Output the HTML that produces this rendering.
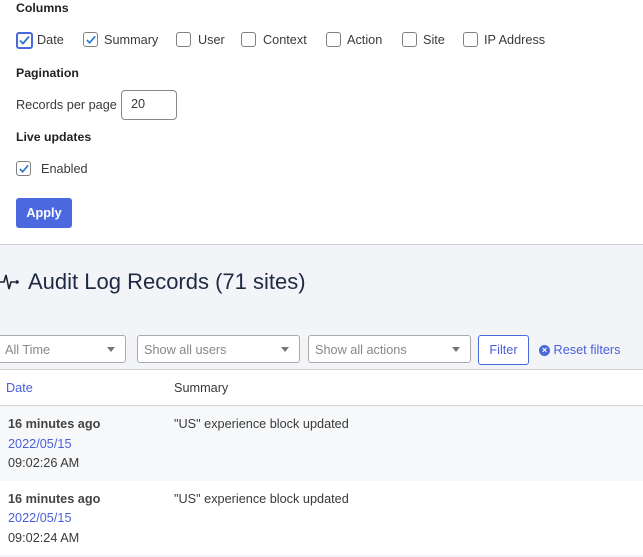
<!DOCTYPE html>
<html><head><style>
*{box-sizing:border-box;margin:0;padding:0}
body{width:643px;height:557px;overflow:hidden;font-family:"Liberation Sans",sans-serif;font-size:12.7px;color:#3a3a3a;background:#fff;position:relative}
.a{position:absolute;white-space:nowrap}
.h{font-weight:bold;color:#222;font-size:12.3px}
.cb{position:absolute;width:15px;height:15px;border:1px solid #808080;border-radius:3px;background:#fff}
.cb svg{position:absolute;left:1px;top:1px}
.sel{position:absolute;top:335px;height:28px;border:1px solid #aaa;border-radius:3px;background:#fff;color:#888;padding:7px 6px;font-size:12.7px}
.sel:after{content:"";position:absolute;right:10px;top:11px;border:4px solid transparent;border-top:5px solid #777}
.blue{color:#4a5fd9}
</style></head><body>
<div class="a h" style="left:16px;top:1px">Columns</div>
<div class="cb" style="left:16px;top:32px;border:2px solid #4a69d9;width:17px;height:17px"><svg width="13" height="13" viewBox="0 0 13 13" style="left:0;top:0"><path d="M2 6.5l3 3 6-7" fill="none" stroke="#2a7ad0" stroke-width="1.8"/></svg></div>
<div class="a" style="left:37px;top:33px">Date</div>
<div class="cb" style="left:83px;top:32px"><svg width="12" height="12" viewBox="0 0 13 13"><path d="M2 6.5l3 3 6-7" fill="none" stroke="#2a7ad0" stroke-width="1.8"/></svg></div>
<div class="a" style="left:104px;top:33px">Summary</div>
<div class="cb" style="left:176px;top:32px"></div><div class="a" style="left:198px;top:33px">User</div>
<div class="cb" style="left:241px;top:32px"></div><div class="a" style="left:263px;top:33px">Context</div>
<div class="cb" style="left:326px;top:32px"></div><div class="a" style="left:347px;top:33px">Action</div>
<div class="cb" style="left:402px;top:32px"></div><div class="a" style="left:423px;top:33px">Site</div>
<div class="cb" style="left:463px;top:32px"></div><div class="a" style="left:484px;top:33px">IP Address</div>
<div class="a h" style="left:16px;top:66px">Pagination</div>
<div class="a" style="left:16px;top:98px">Records per page</div>
<div class="a" style="left:121px;top:90px;width:56px;height:30px;border:1px solid #888;border-radius:4px;padding:6px 9px">20</div>
<div class="a h" style="left:16px;top:130px">Live updates</div>
<div class="cb" style="left:16px;top:161px"><svg width="12" height="12" viewBox="0 0 13 13"><path d="M2 6.5l3 3 6-7" fill="none" stroke="#2a7ad0" stroke-width="1.8"/></svg></div>
<div class="a" style="left:41px;top:162px">Enabled</div>
<div class="a" style="left:16px;top:198px;width:56px;height:30px;background:#4a69de;border-radius:3px;color:#fff;font-weight:bold;text-align:center;line-height:31px">Apply</div>
<div class="a" style="left:0;top:244px;width:643px;height:126px;background:#f3f4f8;border-top:1px solid #d0d0d4;border-bottom:1px solid #d0d0d4"></div>
<svg class="a" style="left:0;top:271px" width="22" height="22" viewBox="0 0 22 22"><path d="M0 11h4l2-7 3 14 2-7h4" fill="none" stroke="#223" stroke-width="1.6"/><circle cx="17" cy="11" r="1.8" fill="#223"/></svg>
<div class="a" style="left:28px;top:269px;font-size:22px;color:#1e2a44">Audit Log Records (71 sites)</div>
<div class="sel" style="left:-2px;width:128px">All Time</div>
<div class="sel" style="left:137px;width:163px">Show all users</div>
<div class="sel" style="left:308px;width:163px">Show all actions</div>
<div class="a blue" style="left:478px;top:335px;width:51px;height:30px;border:1px solid #4a69d9;border-radius:3px;background:#fff;text-align:center;line-height:29px">Filter</div>
<div class="a blue" style="left:539px;top:343px"><span style="display:inline-block;width:11px;height:11px;border-radius:50%;background:#4a69d9;color:#fff;font-size:9px;line-height:11px;text-align:center;font-weight:bold;vertical-align:1px">×</span> Reset filters</div>
<div class="a blue" style="left:6px;top:381px">Date</div>
<div class="a" style="left:174px;top:381px">Summary</div>
<div class="a" style="left:0;top:405px;width:643px;height:76px;background:#f7f8fa;border-top:1px solid #d0d0d4"></div>
<div class="a" style="left:8px;top:417px;font-weight:bold;color:#444">16 minutes ago</div>
<div class="a blue" style="left:8px;top:437px">2022/05/15</div>
<div class="a" style="left:8px;top:456px">09:02:26 AM</div>
<div class="a" style="left:174px;top:417px">"US" experience block updated</div>
<div class="a" style="left:8px;top:492px;font-weight:bold;color:#444">16 minutes ago</div>
<div class="a blue" style="left:8px;top:511px">2022/05/15</div>
<div class="a" style="left:8px;top:531px">09:02:24 AM</div>
<div class="a" style="left:174px;top:492px">"US" experience block updated</div>
<div class="a" style="left:0;top:555px;width:643px;height:2px;background:#f3f4f8"></div>
</body></html>
